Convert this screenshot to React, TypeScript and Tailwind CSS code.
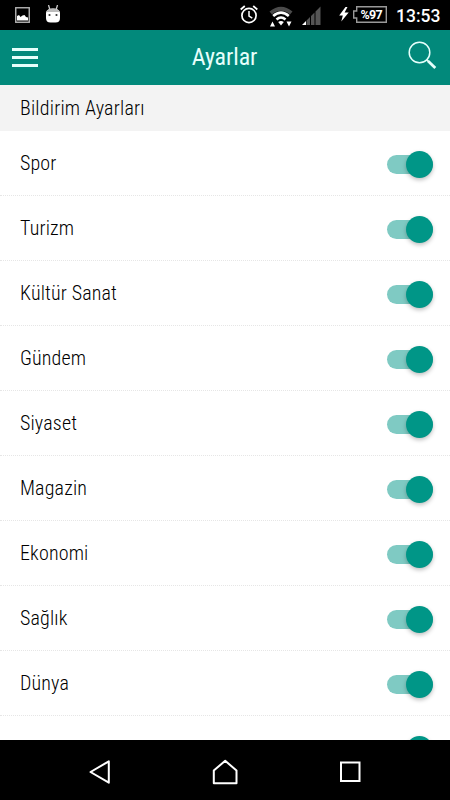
import { useState } from "react";

const categories = [
  "Spor",
  "Turizm",
  "Kültür Sanat",
  "Gündem",
  "Siyaset",
  "Magazin",
  "Ekonomi",
  "Sağlık",
  "Dünya",
  "",
];

const StatusBar = () => {
  return (
    <div className="flex h-[30px] shrink-0 items-center bg-black pr-[10px] pl-[15px] text-white">
      <svg width="15" height="16" viewBox="0 0 15 16">
        <rect x="0.75" y="0.75" width="13.5" height="14.5" fill="none" stroke="#b4b4b4" strokeWidth="1.4" />
        <path d="M2 13.500V9l2-1 1.500 2 2-1.500L9.500 8l1.500 2 2 .5v3z" fill="#fff" />
      </svg>
      <svg width="16" height="18" viewBox="0 0 16 18" className="ml-[15px] -mt-[3px]">
        <path d="M3.500 0l1.500 5M12.500 0L11 5" stroke="#ccc" strokeWidth="1.300" />
        <path d="M1 7.500Q2 3.500 8 3.500t7 4V13q0 4.500-4.500 4.500h-5Q1 17.500 1 13z" fill="#fff" />
        <path d="M1.200 7Q2.500 3.500 8 3.500T14.800 7z" fill="#bbb" />
        <circle cx="4.500" cy="10" r="1.100" fill="#333" />
        <circle cx="11.500" cy="10" r="1.100" fill="#333" />
      </svg>
      <svg width="18" height="19" viewBox="0 0 18 19" fill="none" stroke="#fff" className="-mt-px ml-auto">
        <circle cx="9" cy="10.500" r="7.100" strokeWidth="1.700" />
        <path d="M9 6v5l3.300 2.200" strokeWidth="1.500" />
        <path d="M.7 4.500L4.800 1M17.300 4.500L13.200 1" strokeWidth="1.800" />
      </svg>
      <svg width="24" height="21" viewBox="0 0 24 21" className="ml-[11px] mt-[2px]">
        <path d="M.5 5.500Q12-4 23.500 5.500L21 8.500Q12 1 3 8.500z" fill="#4b4b4b" />
        <path d="M4.200 10Q12 3.200 19.800 10M7.500 13.500Q12 9.500 16.500 13.500" fill="none" stroke="#fff" strokeWidth="2.600" />
        <path d="M9.200 16Q12 13.800 14.800 16L12 19.500z" fill="#fff" />
        <path d="M1 20.500L3.500 15.500 6 20.500zM17.500 15.500h5L20 20.500z" fill="#fff" />
      </svg>
      <svg width="19" height="19" viewBox="0 0 19 19" className="ml-[9px]">
        <path d="M4.500 14.500L8 11v8H4.500zM9 10l3.500-3.500V19H9zM13.500 5.500L18.500.5V19h-5z" fill="#555" />
        <path d="M0 19l4-4v4z" fill="#fff" />
      </svg>
      <svg width="10" height="15" viewBox="0 0 10 15" className="-mt-px ml-[18px]">
        <path d="M6.500 0L.2 8.500h3.600L2.300 14.500 9.700 5.500H5.600L8.500 0z" fill="#fff" />
      </svg>
      <svg width="34" height="17" viewBox="0 0 34 17" className="-mt-px ml-[4px]">
        <path d="M3.700.7h29.600v15.600H3.700v-4.300H.7V5h3z" fill="none" stroke="#999" strokeWidth="1.400" />
        <text x="18.300" y="12.900" fill="#fff" textAnchor="middle" className="font-['Roboto',sans-serif] text-[12.5px] font-bold tracking-[-0.7px]">
          %97
        </text>
      </svg>
      <span className="mt-[3px] ml-[9px] w-[44px] font-['Roboto',sans-serif] text-[17.5px] leading-none font-medium">13:53</span>
    </div>
  );
};

const Header = () => {
  return (
    <div className="flex h-[55px] shrink-0 items-center justify-between bg-[#02897b] pr-[13px] pl-3">
      <div className="flex w-[29px] flex-col gap-[5px]">
        <span className="h-[3px] w-[26px] bg-[#e6fffb]"></span>
        <span className="h-[3px] w-[26px] bg-[#e6fffb]"></span>
        <span className="h-[3px] w-[26px] bg-[#e6fffb]"></span>
      </div>
      <h1 className="-mt-px font-['Roboto_Condensed','Roboto',sans-serif] text-2xl font-normal tracking-[-0.1px] text-[#e6fffb] [font-stretch:75%]">
        Ayarlar
      </h1>
      <svg width="29" height="29" viewBox="0 0 29 29" fill="none" stroke="#e6fffb" className="-mt-1">
        <circle cx="11.500" cy="11.500" r="10.300" strokeWidth="1.500" />
        <path d="M18.500 18.500l2.500 2.500" strokeWidth="1.800" />
        <path d="M20.300 20.300l7 6.700" strokeWidth="2.800" />
      </svg>
    </div>
  );
};

const CategoryRow = ({ name }: { name: string }) => {
  const [enabled, setEnabled] = useState(true);

  return (
    <div className="flex h-[65px] shrink-0 items-center justify-between border-b border-dotted border-[#e6e6e6] pr-[17px] pl-5">
      <span className="text-xl font-light tracking-[0.15px] text-black">{name}</span>
      <button
        role="switch"
        aria-checked={enabled}
        aria-label={name}
        onClick={() => setEnabled(!enabled)}
        className={`mt-[2px] flex h-[19px] w-[46px] items-center rounded-full bg-[#7fcac3] ${enabled ? "justify-end" : "justify-start"}`}
      >
        <span className="size-[27px] shrink-0 rounded-full bg-[#009687] shadow-[0_2px_4px_rgba(0,0,0,0.25)]"></span>
      </button>
    </div>
  );
};

const NavBar = () => {
  return (
    <div className="flex h-[60px] shrink-0 items-center justify-between bg-black pt-1 pr-[88px] pl-[88px]">
      <svg width="24" height="26" viewBox="0 0 24 26" fill="none" stroke="#fff" strokeWidth="2">
        <path d="M20.800 2.300v21.400L2.500 13z" strokeLinejoin="round" />
      </svg>
      <svg width="26" height="26" viewBox="0 0 26 26" fill="none" stroke="#fff" strokeWidth="2">
        <path d="M1.800 24.200V11.500L13.200 1.800l11.300 9.700v12.700z" strokeLinejoin="round" />
      </svg>
      <svg width="24" height="24" viewBox="0 0 24 24" fill="none" stroke="#fff" strokeWidth="2">
        <rect x="3" y="2.500" width="18.500" height="18.500" />
      </svg>
    </div>
  );
};

const App = () => {
  return (
    <div className="flex h-[800px] w-[450px] flex-col overflow-hidden bg-white">
      <StatusBar />
      <Header />
      <div className="flex min-h-0 flex-1 flex-col overflow-hidden bg-white font-['Roboto_Condensed','Roboto',sans-serif] [font-stretch:75%]">
        <h2 className="flex h-[46px] shrink-0 items-center bg-[#f3f3f3] pl-5 text-xl font-light tracking-[0.2px] text-black">
          Bildirim Ayarları
        </h2>
        {categories.map((name, id) => (
          <CategoryRow key={id} name={name} />
        ))}
      </div>
      <NavBar />
    </div>
  );
};

export default App;
